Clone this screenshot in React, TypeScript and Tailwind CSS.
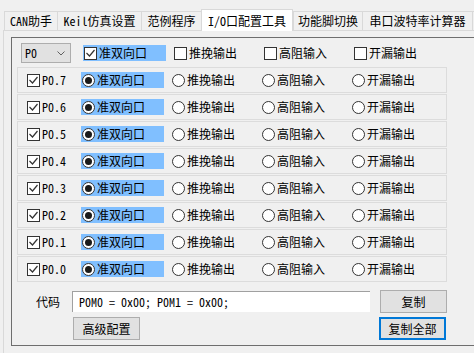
import React from 'react'

const cjk = { fontFamily: '"Noto Sans CJK SC", "Noto Sans", sans-serif' }
const mono = { fontFamily: '"Noto Sans Mono CJK SC", "Liberation Mono", "Noto Sans CJK SC", monospace' }

const tabs = [
    { label: 'CAN助手', w: 53 },
    { label: 'Keil仿真设置', w: 84 },
    { label: '范例程序', w: 60 },
    { label: 'I/O口配置工具', w: 92, active: true },
    { label: '功能脚切换', w: 69 },
    { label: '串口波特率计算器', w: 110 },
    { label: '', w: 60 },
]

const Check = ({ on }: { on?: boolean }) => (
    <span className="w-[13px] h-[13px] shrink-0 border border-[#333333] bg-white flex items-center justify-center">
        {on && (
            <svg width="11" height="11" viewBox="0 0 11 11">
                <polyline points="1.5,5 4.5,8 9.5,2" fill="none" stroke="#333333" strokeWidth="1.2" />
            </svg>
        )}
    </span>
)

const Radio = ({ on }: { on?: boolean }) => (
    <span className="w-[13px] h-[13px] shrink-0 rounded-full border border-[#333333] bg-white flex items-center justify-center">
        {on && <span className="w-[7px] h-[7px] rounded-full bg-[#1a1a1a]" />}
    </span>
)

const modes = ['准双向口', '推挽输出', '高阻输入', '开漏输出']

const Option = ({ kind, label, on }: { kind: 'check' | 'radio'; label: string; on?: boolean }) => (
    <div className="w-[90px] shrink-0 flex items-center">
        <div className={`flex items-center gap-[2px] pl-px h-[16px] ${on ? 'bg-[#80bfff] w-[83px]' : ''}`}>
            {kind === 'check' ? <Check on={on} /> : <Radio on={on} />}
            <span className="text-[12px] leading-none text-black" style={cjk}>{label}</span>
        </div>
    </div>
)

const Btn = ({ label, focus, className }: { label: string; focus?: boolean; className?: string }) => (
    <div
        className={`w-[67px] h-[23px] flex items-center justify-center bg-[#e1e1e1] text-[12px] text-black ${focus ? 'border-2 border-[#0078d7]' : 'border border-[#adadad]'} ${className ?? ''}`}
        style={cjk}
    >
        {label}
    </div>
)

export default function App() {
    const pins = [7, 6, 5, 4, 3, 2, 1, 0]
    return (
        <div className="w-[474px] h-[353px] bg-[#f0f0f0] overflow-hidden">
            {/* tab strip */}
            <div className="flex items-end h-[21px] mt-[9px] pl-[4px]">
                {tabs.map((t, i) => (
                    <div
                        key={i}
                        className={`shrink-0 flex items-center justify-center text-[12px] text-black border-[#d9d9d9] ${
                            t.active ? 'h-[22px] -mb-px bg-white border-t border-l border-r relative z-10' : 'h-[19px] bg-[#f0f0f0] border-t border-l'
                        }`}
                        style={{ width: t.w, ...mono }}
                    >
                        {t.label}
                    </div>
                ))}
            </div>

            {/* tab page */}
            <div className="ml-[3px] w-[490px] h-[330px] border-t border-l border-[#d9d9d9] pt-[6px] pl-[7px]">
                <div className="w-[480px] h-[309px] border border-[#6e6e6e]">
                    {/* header row */}
                    <div className="flex items-center pt-[5px] pl-[9px]">
                        <div className="w-[50px] h-[20px] bg-[#e1e1e1] border border-[#adadad] flex items-center justify-between pl-[3px] pr-[5px] mr-[12px]">
                            <span className="text-[12px] leading-none text-black" style={mono}>P0</span>
                            <svg width="8" height="5" viewBox="0 0 8 5">
                                <polyline points="0.5,0.5 4,4 7.5,0.5" fill="none" stroke="#606060" strokeWidth="1" />
                            </svg>
                        </div>
                        {modes.map((m, i) => (
                            <Option key={m} kind="check" label={m} on={i === 0} />
                        ))}
                    </div>

                    {/* pin rows */}
                    <div className="flex flex-col gap-px mt-[4px] ml-[5px]">
                        {pins.map((p) => (
                            <div key={p} className="w-[430px] h-[26px] border border-[#dcdcdc] flex items-center pl-[9px]">
                                <Check on />
                                <span className="w-[41px] pl-[2px] text-[12px] leading-none text-black" style={mono}>P0.{p}</span>
                                {modes.map((m, i) => (
                                    <Option key={m} kind="radio" label={m} on={i === 0} />
                                ))}
                            </div>
                        ))}
                    </div>

                    {/* code output */}
                    <div className="flex items-center mt-[8px] h-[23px]">
                        <span className="ml-[24px] w-[36px] text-[12px] text-black" style={cjk}>代码</span>
                        <div className="w-[298px] h-[21px] bg-white border-t border-l border-[#a0a0a0] flex items-center pl-[6px]">
                            <span className="text-[12px] leading-none text-black whitespace-pre" style={mono}>P0M0 = 0x00; P0M1 = 0x00;</span>
                        </div>
                        <Btn label="复制" className="ml-[10px]" />
                    </div>
                    <div className="flex items-center mt-[4px]">
                        <Btn label="高级配置" className="ml-[61px]" />
                        <Btn label="复制全部" focus className="ml-[239px]" />
                    </div>
                </div>
            </div>
        </div>
    )
}
